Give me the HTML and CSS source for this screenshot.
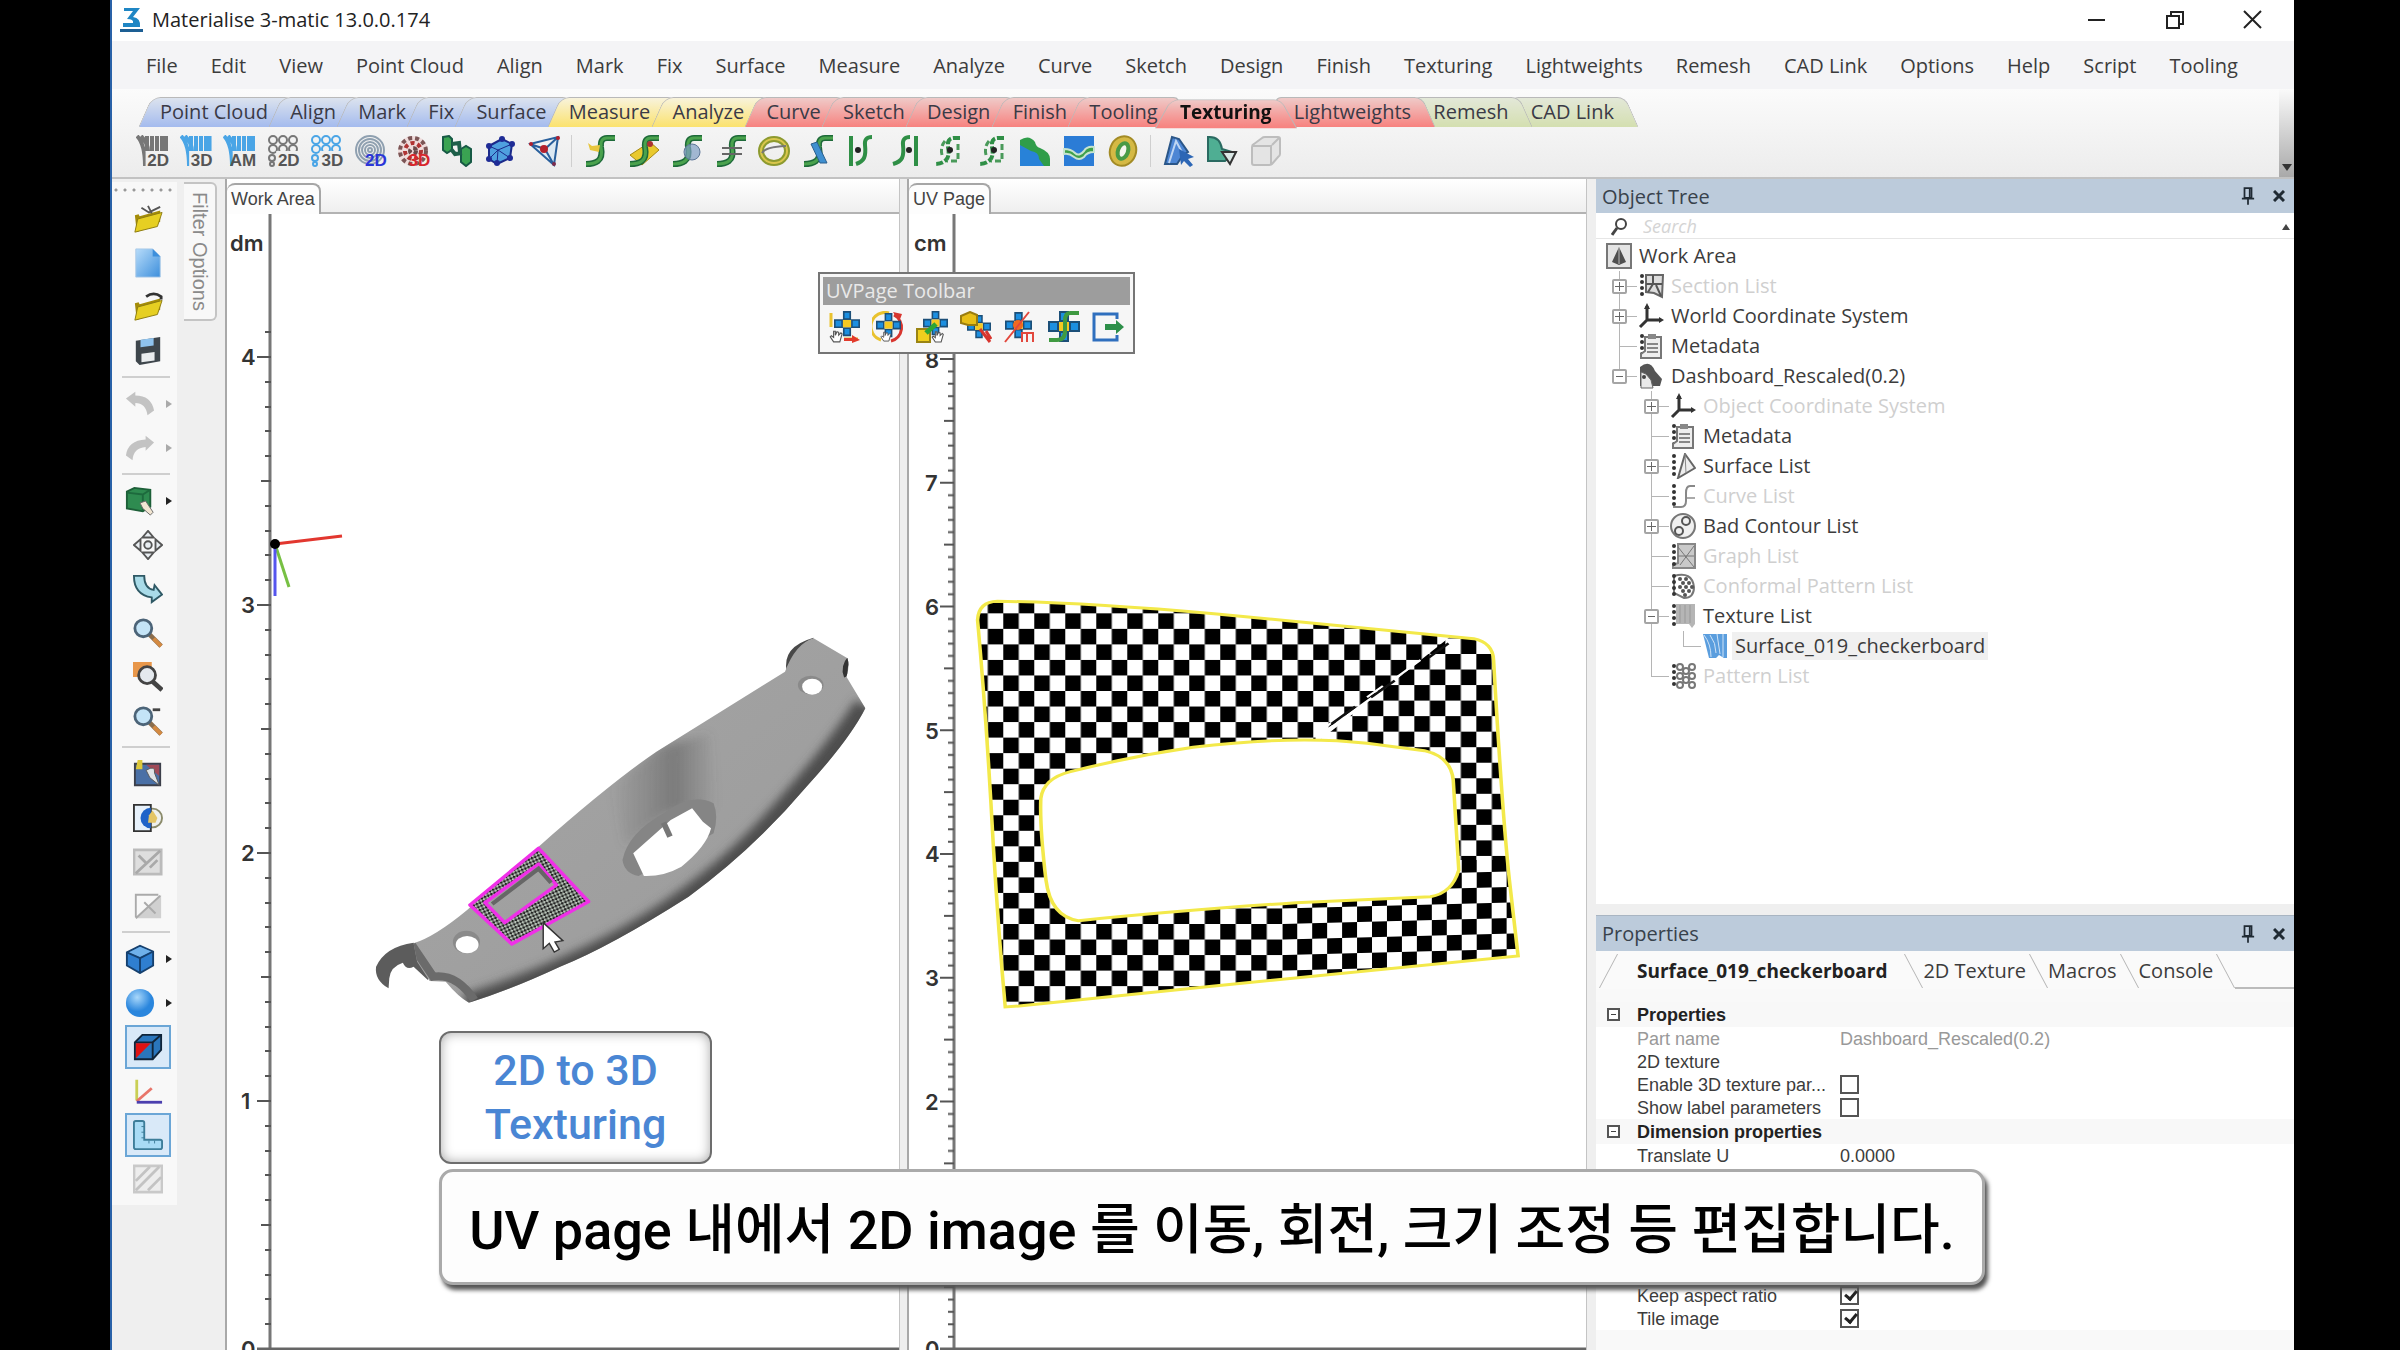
FILE: index.html
```html
<!DOCTYPE html>
<html lang="ko">
<head>
<meta charset="utf-8">
<title>Materialise 3-matic 13.0.0.174</title>
<link rel="stylesheet" href="styles.css">
</head>
<body>
<svg class="sprite" aria-hidden="true">
  <defs>
    <linearGradient id="gBlue" x1="0" y1="0" x2="1" y2="1"><stop offset="0" stop-color="#b7dcfa"/><stop offset="1" stop-color="#3d8fdc"/></linearGradient>
    <linearGradient id="gPart" x1="0" y1="0" x2="1" y2="1"><stop offset="0" stop-color="#a6a6a6"/><stop offset="1" stop-color="#9a9a9a"/></linearGradient>
    <radialGradient id="gBall" cx=".4" cy=".3"><stop offset="0" stop-color="#a9d8fb"/><stop offset="1" stop-color="#2a86dd"/></radialGradient>
    <symbol id="stripes" viewBox="0 0 32 32"><path d="M1 1q8 8 8 30M5 1q7 7 7 15M11 1v15M16 1v16M21 1v16M26 1v16M30 1v16" fill="none" stroke="currentColor" stroke-width="4"/></symbol>
    <symbol id="rings" viewBox="0 0 32 32"><g fill="none" stroke="currentColor" stroke-width="2"><circle cx="6" cy="5" r="4"/><circle cx="16" cy="5" r="4"/><circle cx="26" cy="5" r="4"/><circle cx="6" cy="14" r="4"/><circle cx="16" cy="14" r="4"/><circle cx="26" cy="14" r="4"/><circle cx="5" cy="23" r="3"/><circle cx="5" cy="29" r="2"/></g></symbol>
    <symbol id="finger" viewBox="0 0 32 32"><g fill="none" stroke="#8fa0b0" stroke-width="2"><circle cx="16" cy="15" r="14"/><circle cx="16" cy="15" r="11"/><circle cx="16" cy="15" r="8"/><circle cx="16" cy="15" r="5"/><circle cx="16" cy="15" r="2"/></g></symbol>
    <symbol id="speckle" viewBox="0 0 32 32"><circle cx="16" cy="16" r="15" fill="#efdcdc"/><g fill="none" stroke-width="4" stroke-dasharray="4 3"><circle cx="16" cy="16" r="13" stroke="#7b5555"/><circle cx="16" cy="16" r="8" stroke="#b03434"/><circle cx="16" cy="16" r="3" stroke="#6a4a4a"/></g></symbol>
    <symbol id="linked" viewBox="0 0 32 32"><path d="M2 2l6-1 3 3v11l-5 3-4-3zM20 14l5-3 5 3v13l-5 4-5-4z" fill="#3aa352" stroke="#175a45" stroke-width="2"/><path d="M10 14l4 5 7-1M11 9l7-1 1 9" fill="none" stroke="#1d5f4a" stroke-width="4"/></symbol>
    <symbol id="meshcube" viewBox="0 0 32 32"><path d="M5 11L18 4l10 5-2 14-13 6-8-5z" fill="#4fa0df" stroke="#1b2a8a" stroke-width="2"/><path d="M5 11l9 4 14-6M14 15l-1 14M14 15l12 8M5 24l9-9" fill="none" stroke="#1b2a8a" stroke-width="1"/><g fill="#1f2c96"><circle cx="5" cy="11" r="3"/><circle cx="18" cy="4" r="3"/><circle cx="28" cy="9" r="3"/><circle cx="26" cy="23" r="3"/><circle cx="13" cy="28" r="3"/><circle cx="5" cy="24" r="3"/></g></symbol>
    <symbol id="tetra" viewBox="0 0 32 32"><path d="M2 9L30 2l-4 28zM2 9l15 5L30 2M17 14l9 16" fill="#cfe4f5" fill-opacity=".6" stroke="#285f9c" stroke-width="2"/><circle cx="16" cy="14" r="4" fill="#b3202c"/><circle cx="30" cy="3" r="2" fill="#b3202c"/><circle cx="3" cy="9" r="2" fill="#b3202c"/><circle cx="26" cy="29" r="2" fill="#7b2c4c"/></symbol>
    <symbol id="scurve" viewBox="0 0 32 32"><path d="M31 3H23q-7 0-6 9 2 10-3 14-4 3-12 3" fill="none" stroke="#1d6a39" stroke-width="6"/><path d="M31 3H23q-7 0-6 9 2 10-3 14-4 3-12 3" fill="none" stroke="#4aa24d" stroke-width="3"/></symbol>
    <symbol id="loop" viewBox="0 0 32 32"><ellipse cx="16" cy="16" rx="13" ry="12" fill="none" stroke="#8d9a2f" stroke-width="6"/><ellipse cx="16" cy="16" rx="13" ry="12" fill="none" stroke="#d9c64c" stroke-width="2"/><path d="M4 18q3-6 24-7" fill="none" stroke="#777" stroke-width="2"/></symbol>
    <symbol id="sbar" viewBox="0 0 32 32"><path d="M6 1v30" stroke="#2f8f46" stroke-width="4"/><path d="M27 2q-8 0-7 8 1 9-1 13t-8 6" fill="none" stroke="#2f8f46" stroke-width="4"/><circle cx="13" cy="15" r="3" fill="#222"/></symbol>
    <symbol id="sbar2" viewBox="0 0 32 32"><path d="M27 1v30" stroke="#2f8f46" stroke-width="4"/><path d="M21 2q-8 0-7 8 1 9-1 13t-9 6" fill="none" stroke="#2f8f46" stroke-width="4"/><circle cx="20" cy="15" r="3" fill="#222"/></symbol>
    <symbol id="sdash" viewBox="0 0 32 32"><path d="M28 3H22q-7 0-6 9 2 9-2 13t-11 4" fill="none" stroke="#2f8f46" stroke-width="4" stroke-dasharray="7 2"/><path d="M10 20q-2-8 3-14M26 9v17H15" fill="none" stroke="#4a9a5a" stroke-width="3" stroke-dasharray="6 3"/><circle cx="18" cy="15" r="3" fill="#222"/></symbol>
    <symbol id="cloudblock" viewBox="0 0 32 32"><path d="M1 5q9-6 15 2 1 5 5 6 10 4 10 11v7H1z" fill="#2f9d49"/><path d="M1 10l11 6q8 1 8 8l5 7H1z" fill="#2882d8"/></symbol>
    <symbol id="wave" viewBox="0 0 32 32"><path d="M1 1h30v30H1z" fill="#2b7cd6"/><path d="M1 14q7 0 11 4t9-2q3-5 10-4v5q-7 0-10 5-5 4-10 0t-10-3z" fill="#3fa14a" stroke="#c8e4d0" stroke-width="2"/></symbol>
    <symbol id="torus" viewBox="0 0 32 32"><ellipse cx="16" cy="16" rx="13" ry="15" transform="rotate(20 16 16)" fill="#d5b944" stroke="#a38b25" stroke-width="2"/><ellipse cx="16" cy="16" rx="5" ry="8" transform="rotate(20 16 16)" fill="#f5f5ee" stroke="#4a9a45" stroke-width="4"/></symbol>
    <symbol id="pick" viewBox="0 0 32 32"><path d="M2 29L9 2l7 2 9 13-5 3-6 9z" fill="#4d86d4" stroke="#2a5688" stroke-width="2"/><path d="M6 28L13 6l8 15" fill="none" stroke="#bfd6f2" stroke-width="2"/><path d="M16 14l15 8-6 2 5 6-3 2-6-6-3 4z" fill="#2c66b5"/></symbol>
    <symbol id="partdown" viewBox="0 0 32 32"><path d="M2 2q12-1 14 12l13 4-10 8H2z" fill="#4fae93" stroke="#2a6a61" stroke-width="2"/><path d="M16 17h14l-6 12z" fill="#dbe8e6" stroke="#333" stroke-width="2"/></symbol>
    <symbol id="ghostbox" viewBox="0 0 32 32"><path d="M2 12q0-2 2-3l8-6q1-1 3-1h13q2 0 2 2v15q0 2-2 3l-6 7q-1 1-3 1H4q-2 0-2-2z" fill="#e4e4e4" stroke="#bdbdbd" stroke-width="2"/><path d="M3 11h18v18M22 10l7-7" fill="none" stroke="#bdbdbd" stroke-width="2"/></symbol>

    <symbol id="folder" viewBox="0 0 32 32"><path d="M2 12l4-1 1 2 22-6v12L4 30z" fill="#a48c08"/><path d="M2 30l3-14 26-7-5 15z" fill="#e6cf22" stroke="#8b7a10" stroke-width="1"/></symbol>
    <symbol id="page" viewBox="0 0 32 32"><path d="M3 1h18l8 8v22H3z" fill="url(#gBlue)" stroke="#a6c8e6"/><path d="M21 1l8 8h-8z" fill="#3d8fdc"/></symbol>
    <symbol id="floppy" viewBox="0 0 32 32"><path d="M3 5l26-4v26L7 31l-4-4z" fill="#3e464c"/><path d="M8 4l14-2v8L8 12z" fill="#8fc3ee"/><path d="M9 19l14-2v9L9 28z" fill="#e9ecee"/></symbol>
    <symbol id="undo" viewBox="0 0 32 32"><path d="M1 10L11 3v4q17 0 20 16l-7 5q-2-13-13-13v4z" fill="#c3c3c3"/></symbol>
    <symbol id="redo" viewBox="0 0 32 32"><path d="M31 10L22 3v4Q3 8 1 24l7 5q1-13 14-14v4z" fill="#c3c3c3"/></symbol>
    <symbol id="greenbox" viewBox="0 0 32 32"><path d="M2 6l8-4 17 2v18l-8 5-17-3z" fill="#2e8b50" stroke="#1d5f38" stroke-width="2"/><path d="M2 7l17 2 8-5M19 9v17" fill="none" stroke="#1d6a3d" stroke-width="2"/><path d="M16 18l6-2 4 6 4 6-3 3-8-7z" fill="#f2e6d2" stroke="#666"/></symbol>
    <symbol id="move" viewBox="0 0 32 32"><g fill="#e9eef2" stroke="#555" stroke-width="2"><path d="M16 1l6 7H10zM16 31l6-7H10zM1 16l7-6v12zM31 16l-7-6v12z"/><circle cx="16" cy="16" r="4"/></g></symbol>
    <symbol id="turn" viewBox="0 0 32 32"><path d="M1 2h11q0 13 10 15l1-5 8 10-11 8v-5Q1 22 1 2z" fill="#a9dbe8" stroke="#2f5965" stroke-width="2"/></symbol>
    <symbol id="lens" viewBox="0 0 32 32"><path d="M17 17l13 13" stroke="#8a6d4d" stroke-width="5"/><path d="M22 22l8 8" stroke="#d48a42" stroke-width="4"/><circle cx="11" cy="11" r="9" fill="#c4e4f7" stroke="#4c6478" stroke-width="3"/></symbol>
    <symbol id="lensbox" viewBox="0 0 32 32"><path d="M0 0h20v16H0z" fill="#e8974a"/><path d="M20 20l11 10" stroke="#444" stroke-width="5"/><circle cx="15" cy="14" r="9" fill="#e4e9ee" stroke="#444" stroke-width="3"/></symbol>
    <symbol id="photo" viewBox="0 0 32 32"><path d="M2 5h27v23H2z" fill="#4a70a6" stroke="#3c3f4a" stroke-width="2"/><path d="M14 6h14v12z" fill="#a04a58"/><path d="M5 1h5v10H3z" fill="#ddc83a"/><path d="M14 12q10-6 9 3l5 13-10-8z" fill="#dfe3e6" stroke="#555"/></symbol>
    <symbol id="halfball" viewBox="0 0 32 32"><circle cx="21" cy="16" r="10" fill="#eef0ee" stroke="#8b8b6b" stroke-width="2"/><path d="M1 2h18v28H1z" fill="#e7f1fb" stroke="#333" stroke-width="2"/><path d="M19 5a11 11 0 0 0 0 22z" fill="#1f63c8"/><path d="M17 13l4-5 5 8-2 5h-8z" fill="#e4c566"/></symbol>
    <symbol id="ghost" viewBox="0 0 32 32"><path d="M1 3h29v26H1z" fill="#dedede" stroke="#bbb" stroke-width="3"/><path d="M3 28L29 4M6 9l8 8M18 22l8-8" stroke="#a9a9a9" stroke-width="3"/></symbol>
    <symbol id="ghost2" viewBox="0 0 32 32"><path d="M30 4v25H3z" fill="#d0d0d0"/><path d="M3 28V4h24M3 29L29 5M12 12l12 12" fill="none" stroke="#aaa" stroke-width="2"/></symbol>
    <symbol id="cube" viewBox="0 0 32 32"><path d="M2 9l14-7 14 6v15l-14 8-14-8z" fill="#2f7fd0" stroke="#15406e" stroke-width="2"/><path d="M4 9l12-6 12 5-12 6z" fill="#6fb1ea"/><path d="M2 9l14 6v16M16 15l14-7" fill="none" stroke="#15406e" stroke-width="2"/></symbol>
    <symbol id="ball" viewBox="0 0 32 32"><circle cx="16" cy="16" r="15" fill="url(#gBall)"/></symbol>
    <symbol id="cutcube" viewBox="0 0 32 32"><path d="M2 11l8-8h20v16l-9 10H2z" fill="#2a76bd" stroke="#10253a" stroke-width="2"/><path d="M2 11h19v18M21 11l9-8" fill="none" stroke="#10253a" stroke-width="2"/><path d="M3 12h16L3 28z" fill="#e01212"/></symbol>
    <symbol id="axes" viewBox="0 0 32 32"><path d="M4 4v22" stroke="#c9cf55" stroke-width="3"/><path d="M4 27L20 13" stroke="#e8756a" stroke-width="3"/><path d="M4 28h27" stroke="#4b3fae" stroke-width="3"/></symbol>
    <symbol id="ruler" viewBox="0 0 32 32"><path d="M3 1h7q2 0 2 2v18h17q2 0 2 2v6q0 2-2 2H3q-2 0-2-2V3q0-2 2-2z" fill="#a8dbf5" stroke="#3d7d99" stroke-width="2"/><path d="M9 7h3M9 13h3M9 19h3M17 22v3M23 22v3" stroke="#3d7d99"/></symbol>
    <symbol id="hatch" viewBox="0 0 32 32"><path d="M1 2h30v28H1z" fill="#ededed" stroke="#c9c9c9" stroke-width="3"/><path d="M3 18L18 3M3 28L28 3M16 28l14-14" stroke="#c3c3c3" stroke-width="3"/></symbol>

    <symbol id="plus5" viewBox="0 0 32 32"><g fill="#1c8fe0" stroke="#1c4f78" stroke-width="2"><path d="M12 1h8v9h-8zM12 21h8v9h-8zM1 11h9v9H1zM22 11h9v9h-9z"/></g><path d="M11 11h10v9H11z" fill="#f5c921"/></symbol>
    <symbol id="hand" viewBox="0 0 32 32"><path d="M10 30l-6-9 2-2 4 3V11h3v7l3-6 3 1v5l4-4 2 2-4 14z" fill="#fff" stroke="#555" stroke-width="2"/></symbol>
    <symbol id="export" viewBox="0 0 32 32"><path d="M25 8V3H2v26h23v-5" fill="none" stroke="#2f6fbe" stroke-width="3"/><path d="M13 13h11V9l8 7-8 7v-4H13z" fill="#2d8f49"/></symbol>

    <symbol id="t-area" viewBox="0 0 26 26"><path d="M1 1h24v24H1z" fill="#e4e4e4" stroke="#777" stroke-width="2"/><path d="M13 4l7 15-7 3-7-3z" fill="#4f4f4f"/><path d="M13 5v16" stroke="#bbb"/></symbol>
    <symbol id="t-dots" viewBox="0 0 26 26"><g fill="#333"><circle cx="4" cy="3" r="2"/><circle cx="4" cy="9" r="2"/><circle cx="4" cy="15" r="2"/><circle cx="4" cy="21" r="2"/></g></symbol>
    <symbol id="t-section" viewBox="0 0 26 26"><use href="#t-dots"/><path d="M8 2h17l-1 22-8-4-8-1z" fill="#ddd" stroke="#666" stroke-width="2"/><path d="M8 11h16M15 2v9l-5 8M18 12l5 11" stroke="#555" stroke-width="2" fill="none"/></symbol>
    <symbol id="t-axes" viewBox="0 0 26 26"><path d="M9 3v14h14M9 17l-7 7" fill="none" stroke="#333" stroke-width="3"/><path d="M9 0l3 6H6zM26 17l-5-3v6z" fill="#333"/></symbol>
    <symbol id="t-meta" viewBox="0 0 26 26"><use href="#t-dots"/><path d="M7 4h16v21H3v-4l4-3z" fill="#eee" stroke="#777" stroke-width="2"/><path d="M10 1h8v5h-8z" fill="#888"/><path d="M9 11h11M9 15h11M9 19h11" stroke="#888" stroke-width="2"/></symbol>
    <symbol id="t-part" viewBox="0 0 26 26"><path d="M2 4q10-8 15 4l7 8-2 7H2z" fill="#555"/><path d="M3 9l5 2 5 6 2 8H3z" fill="#e9e9e9" stroke="#666"/><circle cx="6" cy="14" r="2" fill="#444"/></symbol>
    <symbol id="t-surface" viewBox="0 0 26 26"><use href="#t-dots"/><path d="M15 1l10 14L8 25z" fill="#eee" stroke="#666" stroke-width="2"/><path d="M15 1l1 19" stroke="#888"/></symbol>
    <symbol id="t-curve" viewBox="0 0 26 26"><use href="#t-dots"/><path d="M25 3h-5q-4 0-4 7v8q0 6-5 6H3" fill="none" stroke="#888" stroke-width="2"/><path d="M17 15h8" stroke="#aaa" stroke-width="2"/></symbol>
    <symbol id="t-contour" viewBox="0 0 26 26"><circle cx="13" cy="13" r="12" fill="#f0f0f0" stroke="#777" stroke-width="2"/><g fill="none" stroke="#555" stroke-width="2"><circle cx="16" cy="8" r="4"/><circle cx="9" cy="18" r="4"/></g></symbol>
    <symbol id="t-graph" viewBox="0 0 26 26"><path d="M8 1h17v24H3v-3l5-2z" fill="#c9c9c9" stroke="#888" stroke-width="2"/><path d="M8 4l16 20M24 3L10 22M8 13h16" stroke="#777"/><use href="#t-dots"/></symbol>
    <symbol id="t-conf" viewBox="0 0 26 26"><path d="M4 3q18-5 20 11 0 11-10 11L4 20z" fill="#fff" stroke="#777" stroke-width="2"/><g fill="#555"><circle cx="10" cy="6" r="2"/><circle cx="16" cy="6" r="2"/><circle cx="13" cy="10" r="2"/><circle cx="19" cy="10" r="2"/><circle cx="10" cy="14" r="2"/><circle cx="16" cy="14" r="2"/><circle cx="22" cy="14" r="2"/><circle cx="13" cy="18" r="2"/><circle cx="19" cy="18" r="2"/><circle cx="15" cy="22" r="2"/></g><use href="#t-dots"/></symbol>
    <symbol id="t-texture" viewBox="0 0 26 26"><path d="M6 1h19v20l-3 4-3-4H6z" fill="#b5b5b5"/><path d="M10 2v18M15 2v18M20 2v18" stroke="#999"/><use href="#t-dots"/></symbol>
    <symbol id="t-checker" viewBox="0 0 26 26"><path d="M1 1h24v24h-3l-5-3-3 3H7z" fill="#5b9ede"/><path d="M2 2q7 9 7 22M8 2q6 8 6 18M15 1l3 20M21 1v23" fill="none" stroke="#cfe3f7"/></symbol>
    <symbol id="t-pattern" viewBox="0 0 26 26"><g fill="none" stroke="#777" stroke-width="2"><circle cx="10" cy="4" r="3"/><circle cx="16" cy="8" r="3"/><circle cx="22" cy="4" r="3"/><circle cx="10" cy="13" r="3"/><circle cx="16" cy="17" r="3"/><circle cx="22" cy="13" r="3"/><circle cx="10" cy="22" r="3"/><circle cx="22" cy="22" r="3"/></g><use href="#t-dots"/></symbol>
    <symbol id="pin" viewBox="0 0 16 20"><path d="M4 1h8v11H4z" fill="none" stroke="#1f2a33" stroke-width="2"/><path d="M10 1v11M1 13h14M8 13v7" stroke="#1f2a33" stroke-width="2"/></symbol>
    <symbol id="cross" viewBox="0 0 12 12"><path d="M1 1l10 10M11 1L1 11" stroke="#1f2a33" stroke-width="3"/></symbol>
  </defs>
</svg>

<div class="app">
  <header class="titlebar">
    <svg class="logo" viewBox="0 0 24 26"><path d="M4 1h16l-7 9q8 1 7 10H3v-4h10q1-4-6-4l6-8H4z" fill="#1f86c4"/><path d="M0 22h23v3H0z" fill="#1d5f94"/></svg>
    <h1>Materialise 3-matic 13.0.0.174</h1>
    <div class="winctl">
      <button aria-label="Minimize"><svg viewBox="0 0 20 20"><path d="M1 10h17" stroke="#222" stroke-width="2"/></svg></button>
      <button aria-label="Restore"><svg viewBox="0 0 20 20"><path d="M2 6h12v12H2zM6 5V2h12v12h-3" fill="none" stroke="#222" stroke-width="2"/></svg></button>
      <button aria-label="Close"><svg viewBox="0 0 20 20"><path d="M1 1l17 17M18 1L1 18" stroke="#222" stroke-width="2"/></svg></button>
    </div>
  </header>

  <nav class="menubar">
    <button>File</button><button>Edit</button><button>View</button><button>Point Cloud</button><button>Align</button><button>Mark</button><button>Fix</button><button>Surface</button><button>Measure</button><button>Analyze</button><button>Curve</button><button>Sketch</button><button>Design</button><button>Finish</button><button>Texturing</button><button>Lightweights</button><button>Remesh</button><button>CAD Link</button><button>Options</button><button>Help</button><button>Script</button><button>Tooling</button>
  </nav>

  <section class="ribbon">
    <div class="ribbon-main">
      <div class="tabs">
        <button class="blue">Point Cloud</button><button class="blue">Align</button><button class="blue">Mark</button><button class="blue">Fix</button><button class="blue">Surface</button><button class="yellow">Measure</button><button class="yellow">Analyze</button><button class="red">Curve</button><button class="red">Sketch</button><button class="red">Design</button><button class="red">Finish</button><button class="red">Tooling</button><button class="red active">Texturing</button><button class="red after a1">Lightweights</button><button class="green after a2">Remesh</button><button class="green after a3">CAD Link</button>
      </div>
      <div class="tools">
        <button class="gray" aria-label="2D texture"><svg><use href="#stripes"/></svg><b>2D</b></button>
        <button class="sky" aria-label="3D texture"><svg><use href="#stripes"/></svg><b>3D</b></button>
        <button class="sky" aria-label="AM texture"><svg><use href="#stripes"/></svg><b>AM</b></button>
        <button class="gray" aria-label="2D pattern"><svg><use href="#rings"/></svg><b>2D</b></button>
        <button class="sky" aria-label="3D pattern"><svg><use href="#rings"/></svg><b>3D</b></button>
        <button class="navy" aria-label="2D conformal"><svg><use href="#finger"/></svg><b>2D</b></button>
        <button class="crimson" aria-label="3D conformal"><svg><use href="#speckle"/></svg><b>3D</b></button>
        <button aria-label="Link parts"><svg><use href="#linked"/></svg></button>
        <button aria-label="Mesh cube"><svg><use href="#meshcube"/></svg></button>
        <button aria-label="Tetra graph"><svg><use href="#tetra"/></svg></button>
        <i></i>
        <button aria-label="New curve"><svg viewBox="0 0 32 32"><use href="#scurve"/><path d="M4 8l4 3 8-1-1 7-9-2z" fill="#e7c63f"/></svg></button>
        <button aria-label="Curve on face"><svg viewBox="0 0 32 32"><path d="M2 20L22 7l9 8-17 15z" fill="#e9c92e" stroke="#a78a14"/><use href="#scurve"/><circle cx="22" cy="9" r="3" fill="#a33"/></svg></button>
        <button aria-label="Project curve"><svg viewBox="0 0 32 32"><use href="#scurve"/><circle cx="21" cy="17" r="8" fill="#7f9ec4" fill-opacity=".7" stroke="#5d7698"/></svg></button>
        <button aria-label="Split curve"><svg viewBox="0 0 32 32"><use href="#scurve"/><path d="M7 13h20M7 19h20" stroke="#666" stroke-width="2"/></svg></button>
        <button aria-label="Close curve"><svg><use href="#loop"/></svg></button>
        <button aria-label="Attach curve"><svg viewBox="0 0 32 32"><use href="#scurve"/><path d="M9 9l6-2 10 21h-7z" fill="#3f8fd0" stroke="#2b5f8d"/></svg></button>
        <button aria-label="Offset left"><svg><use href="#sbar"/></svg></button>
        <button aria-label="Offset right"><svg><use href="#sbar2"/></svg></button>
        <button aria-label="Dashed curve"><svg><use href="#sdash"/></svg></button>
        <button aria-label="Dashed contour"><svg><use href="#sdash"/></svg></button>
        <button aria-label="Block"><svg><use href="#cloudblock"/></svg></button>
        <button aria-label="Wave split"><svg><use href="#wave"/></svg></button>
        <button aria-label="Torus"><svg><use href="#torus"/></svg></button>
        <i></i>
        <button aria-label="Pick"><svg><use href="#pick"/></svg></button>
        <button aria-label="Filter part"><svg><use href="#partdown"/></svg></button>
        <button aria-label="Box"><svg><use href="#ghostbox"/></svg></button>
      </div>
    </div>
    <button class="more" aria-label="More tools"></button>
  </section>

  <main class="workspace">
    <aside class="side">
      <div class="sidebar">
        <button aria-label="Open part"><svg viewBox="0 0 32 32"><use href="#folder"/><path d="M9 4l8 5 12-6M16 2l4 8" fill="none" stroke="#555" stroke-width="2"/></svg></button>
        <button aria-label="New"><svg><use href="#page"/></svg></button>
        <button aria-label="Open"><svg viewBox="0 0 32 32"><use href="#folder"/><path d="M14 5q8-6 16 0v3" fill="none" stroke="#333" stroke-width="3"/></svg></button>
        <button aria-label="Save"><svg><use href="#floppy"/></svg></button>
        <hr>
        <button class="drop off" aria-label="Undo"><svg><use href="#undo"/></svg></button>
        <button class="drop off" aria-label="Redo"><svg><use href="#redo"/></svg></button>
        <hr>
        <button class="drop" aria-label="Select"><svg><use href="#greenbox"/></svg></button>
        <button aria-label="Pan"><svg><use href="#move"/></svg></button>
        <button aria-label="Rotate"><svg><use href="#turn"/></svg></button>
        <button aria-label="Zoom"><svg><use href="#lens"/></svg></button>
        <button aria-label="Zoom box"><svg><use href="#lensbox"/></svg></button>
        <button aria-label="Zoom out"><svg viewBox="0 0 32 32"><use href="#lens"/><path d="M21 4h8" stroke="#444" stroke-width="3"/></svg></button>
        <hr>
        <button aria-label="Snapshot"><svg><use href="#photo"/></svg></button>
        <button aria-label="Compare"><svg><use href="#halfball"/></svg></button>
        <button aria-label="Hide"><svg><use href="#ghost"/></svg></button>
        <button aria-label="Show"><svg><use href="#ghost2"/></svg></button>
        <hr>
        <button class="drop" aria-label="View cube"><svg><use href="#cube"/></svg></button>
        <button class="drop" aria-label="Shading"><svg><use href="#ball"/></svg></button>
        <button class="on" aria-label="Clipping"><svg><use href="#cutcube"/></svg></button>
        <button aria-label="Axes"><svg><use href="#axes"/></svg></button>
        <button class="on" aria-label="Rulers"><svg><use href="#ruler"/></svg></button>
        <button aria-label="Hatch"><svg><use href="#hatch"/></svg></button>
      </div>
      <button class="filter">Filter Options</button>
    </aside>

    <section class="view">
      <div class="view-head"><button>Work Area</button></div>
      <svg class="scene">
        <defs>
          <pattern id="tickDm" width="14" height="248" patternUnits="userSpaceOnUse" x="30" y="142">
            <path d="M0 1h14M8 26h6M8 51h6M8 75h6M8 100h6M4 125h10M8 150h6M8 175h6M8 199h6M8 224h6" stroke="#555" stroke-width="2"/>
          </pattern>
          <pattern id="weave" width="14" height="14" patternUnits="userSpaceOnUse" patternTransform="rotate(20)"><path d="M0 0h14v14H0z" fill="#b9c4b9"/><path d="M0 0h7v7H0zM7 7h7v7H7z" fill="#222"/></pattern>
          <linearGradient id="shade" x1="0" y1="0" x2="1" y2="0"><stop offset="0" stop-color="#555" stop-opacity="0"/><stop offset=".6" stop-color="#555" stop-opacity=".5"/><stop offset="1" stop-color="#555" stop-opacity="0"/></linearGradient>
          <filter id="soft"><feGaussianBlur stdDeviation="14"/></filter>
          <clipPath id="partClip"><path d="M150 1030Q210 1010 300 930L500 740Q700 550 830 455L1190 215Q1220 130 1270 115L1365 175Q1372 200 1362 230L1415 325Q1370 420 1250 560Q1100 750 920 890Q700 1040 560 1100Q420 1170 305 1208Q275 1190 240 1145L195 1143L160 1085Z"/></clipPath>
        </defs>
        <path d="M43 0v1136" stroke="#777" stroke-width="3"/>
        <rect x="30" y="117" width="14" height="1020" fill="url(#tickDm)"/>
        <path d="M30 1135h3000" stroke="#666" stroke-width="3"/>
        <g class="scale"><text x="3" y="37">dm</text><text x="14" y="151">4</text><text x="14" y="399">3</text><text x="14" y="647">2</text><text x="14" y="895">1</text><text x="14" y="1143">0</text></g>
        <path d="M48 330l67-8" stroke="#e2372f" stroke-width="3"/><path d="M48 330l14 43" stroke="#77c043" stroke-width="3"/><path d="M48 330v52" stroke="#5555ee" stroke-width="3"/><circle cx="48" cy="330" r="5"/>
        <svg x="133" y="386" width="560" height="420" viewBox="0 0 1568 1260" preserveAspectRatio="none">
          <path d="M80 1165Q40 1140 45 1100Q70 1040 150 1028L210 1100L190 1140L150 1100Q130 1112 120 1088Q85 1100 82 1135Z" fill="#5c5c5c"/>
          <path d="M1195 215Q1180 140 1270 113L1240 190Z" fill="#484848"/>
          <path d="M150 1030Q210 1010 300 930L500 740Q700 550 830 455L1190 215Q1220 130 1270 115L1365 175Q1372 200 1362 230L1415 325Q1370 420 1250 560Q1100 750 920 890Q700 1040 560 1100Q420 1170 305 1208Q275 1190 240 1145L195 1143L160 1085Z" fill="url(#gPart)"/>
          <g clip-path="url(#partClip)">
            <path d="M300 1220Q560 1130 760 1010Q1000 860 1160 670Q1330 470 1420 320" fill="none" stroke="#4d4d4d" stroke-width="76" filter="url(#soft)"/>
            <path d="M700 560L840 440 980 400 1000 620 860 640 740 740Z" fill="url(#shade)" filter="url(#soft)"/>
            <path d="M145 1035L205 1130Q270 1120 320 1200" fill="none" stroke="#6b6b6b" stroke-width="24"/>
            <path d="M1375 170Q1350 200 1362 230" fill="none" stroke="#333" stroke-width="14"/>
          </g>
          <path d="M735 780Q750 700 850 640Q930 575 990 610Q1005 650 990 700L780 828Q740 820 735 780Z" fill="#858585"/>
          <path d="M765 760L870 660 930 625 960 665 983 685Q970 740 900 800Q850 830 795 828Z" fill="#fff"/>
          <path d="M850 668l18 42" stroke="#777" stroke-width="16"/>
          <ellipse cx="1262" cy="255" rx="36" ry="28" fill="#8a8a8a"/><ellipse cx="1266" cy="260" rx="28" ry="24" fill="#fff"/>
          <ellipse cx="298" cy="1026" rx="38" ry="34" fill="#8a8a8a"/><ellipse cx="300" cy="1034" rx="32" ry="26" fill="#fff"/>
          <path d="M500 745L640 905 425 1032 308 915ZM350 908L405 968 550 855 500 792Z" fill="url(#weave)" fill-rule="evenodd" stroke="#f02fe8" stroke-width="10" stroke-linejoin="round"/>
          <path d="M370 912L500 806l35 42" fill="none" stroke="#666" stroke-width="12"/>
          <path d="M513 968v78l17-16 14 26 14-8-12-22 22-4z" fill="#fff" stroke="#333" stroke-width="4"/>
        </svg>
      </svg>
    </section>

    <section class="view uv">
      <div class="view-head"><button>UV Page</button></div>
      <svg class="scene">
        <defs>
          <pattern id="tickCm" width="14" height="123.75" patternUnits="userSpaceOnUse" x="31" y="144">
            <path d="M0 1h14M8 13.4h6M8 25.8h6M8 38.1h6M8 50.5h6M4 62.9h10M8 75.3h6M8 87.6h6M8 100h6M8 112.4h6" stroke="#555" stroke-width="2"/>
          </pattern>
          <pattern id="chk1" width="78.4" height="93.2" patternUnits="userSpaceOnUse" x="160" y="160"><path d="M0 0h39.2v46.6H0zM39.2 46.6h39.2v46.6H39.2z"/></pattern>
          <pattern id="chk2" width="78.4" height="93.2" patternUnits="userSpaceOnUse" x="1278" y="282"><path d="M0 0h39.2v46.6H0zM39.2 46.6h39.2v46.6H39.2z"/></pattern>
          <pattern id="chk3" width="78.4" height="93.2" patternUnits="userSpaceOnUse" patternTransform="matrix(.965 -.03 0 1 865.6 1092)"><path d="M0 0h39.2v46.6H0zM39.2 46.6h39.2v46.6H39.2z"/></pattern>
          <path id="uvShape" d="M95 180Q98 125 145 124Q350 126 700 162L1350 236Q1398 248 1400 300Q1422 760 1440 960L1462 1188L700 1277L200 1338L165 1341Q148 1120 135 860Q118 480 95 180ZM255 715Q262 655 330 635Q480 590 640 562Q900 525 1080 550L1225 572Q1292 590 1298 660L1312 930Q1295 1000 1240 1010L900 1028Q600 1052 350 1082Q280 1070 268 960Q252 800 255 715Z"/>
          <clipPath id="uvClip"><use href="#uvShape" clip-rule="evenodd"/></clipPath>
        </defs>
        <path d="M45 0v1136" stroke="#777" stroke-width="3"/>
        <rect x="31" y="144" width="14" height="992" fill="url(#tickCm)"/>
        <path d="M31 1135h3000" stroke="#666" stroke-width="3"/>
        <g class="scale"><text x="5" y="37">cm</text><text x="16" y="154">8</text><text x="16" y="277">7</text><text x="16" y="401">6</text><text x="16" y="525">5</text><text x="16" y="648">4</text><text x="16" y="772">3</text><text x="16" y="896">2</text><text x="16" y="1143">0</text></g>
        <svg x="31" y="346" width="620" height="480" viewBox="0 0 1568 1440" preserveAspectRatio="none">
          <g clip-path="url(#uvClip)">
            <path d="M0 0H1568V1440H0Z" fill="#fff"/>
            <path d="M80 100H1290V240L950 530 935 900H865V1400H80Z" fill="url(#chk1)"/>
            <path d="M1290 230L1500 230V900H1200V560H940Z" fill="url(#chk2)"/>
            <path d="M866 900H1500V1400H866Z" fill="url(#chk3)"/>
            <path d="M1215 300l-60 52M1120 378l-40 34M1020 460l-60 56" stroke="#fff" stroke-width="6"/>
            <path d="M1286 250l-50 43M1150 362l-60 50M1050 440l-60 52" stroke="#111" stroke-width="7"/>
          </g>
          <use href="#uvShape" fill="none" stroke="#f3e94a" stroke-width="9"/>
        </svg>
      </svg>
    </section>

    <aside class="dock">
      <section class="tree-panel">
        <header class="dock-head"><h2>Object Tree</h2><button aria-label="Pin"><svg class="i-pin"><use href="#pin"/></svg></button><button aria-label="Close"><svg class="i-x"><use href="#cross"/></svg></button></header>
        <label class="search"><svg viewBox="0 0 16 18"><circle cx="10" cy="6" r="5" fill="none" stroke="#444" stroke-width="2"/><path d="M6 10l-5 7" stroke="#444" stroke-width="3"/></svg><input type="text" placeholder="Search" aria-label="Search"><span class="up"></span></label>
        <div class="tree">
          <div class="row root"><svg><use href="#t-area"/></svg><span>Work Area</span></div>
          <ul>
            <li><div class="row"><button class="exp plus" aria-label="Expand"></button><svg><use href="#t-section"/></svg><span class="dim">Section List</span></div></li>
            <li><div class="row"><button class="exp plus" aria-label="Expand"></button><svg><use href="#t-axes"/></svg><span>World Coordinate System</span></div></li>
            <li><div class="row"><i class="exp"></i><svg><use href="#t-meta"/></svg><span>Metadata</span></div></li>
            <li><div class="row"><button class="exp minus" aria-label="Collapse"></button><svg><use href="#t-part"/></svg><span>Dashboard_Rescaled(0.2)</span></div>
              <ul>
                <li><div class="row"><button class="exp plus" aria-label="Expand"></button><svg><use href="#t-axes"/></svg><span class="dim">Object Coordinate System</span></div></li>
                <li><div class="row"><i class="exp"></i><svg><use href="#t-meta"/></svg><span>Metadata</span></div></li>
                <li><div class="row"><button class="exp plus" aria-label="Expand"></button><svg><use href="#t-surface"/></svg><span>Surface List</span></div></li>
                <li><div class="row"><i class="exp"></i><svg><use href="#t-curve"/></svg><span class="dim">Curve List</span></div></li>
                <li><div class="row"><button class="exp plus" aria-label="Expand"></button><svg><use href="#t-contour"/></svg><span>Bad Contour List</span></div></li>
                <li><div class="row"><i class="exp"></i><svg><use href="#t-graph"/></svg><span class="dim">Graph List</span></div></li>
                <li><div class="row"><i class="exp"></i><svg><use href="#t-conf"/></svg><span class="dim">Conformal Pattern List</span></div></li>
                <li><div class="row"><button class="exp minus" aria-label="Collapse"></button><svg><use href="#t-texture"/></svg><span>Texture List</span></div>
                  <ul><li><div class="row"><i class="exp"></i><svg><use href="#t-checker"/></svg><span class="picked">Surface_019_checkerboard</span></div></li></ul>
                </li>
                <li><div class="row"><i class="exp"></i><svg><use href="#t-pattern"/></svg><span class="dim">Pattern List</span></div></li>
              </ul>
            </li>
          </ul>
        </div>
      </section>

      <section class="prop-panel">
        <header class="dock-head"><h2>Properties</h2><button aria-label="Pin"><svg class="i-pin"><use href="#pin"/></svg></button><button aria-label="Close"><svg class="i-x"><use href="#cross"/></svg></button></header>
        <div class="prop-tabs"><button class="current">Surface_019_checkerboard</button><button>2D Texture</button><button>Macros</button><button>Console</button><span class="rest"></span></div>
        <table>
          <colgroup><col class="c-fold"><col class="c-name"><col></colgroup>
          <tbody>
            <tr class="group"><td><button class="fold" aria-label="Collapse Properties"></button></td><th colspan="2">Properties</th></tr>
            <tr class="dimrow"><td></td><th>Part name</th><td>Dashboard_Rescaled(0.2)</td></tr>
            <tr><td></td><th>2D texture</th><td></td></tr>
            <tr><td></td><th><label for="p3d">Enable 3D texture par...</label></th><td><input type="checkbox" id="p3d"></td></tr>
            <tr><td></td><th><label for="plab">Show label parameters</label></th><td><input type="checkbox" id="plab"></td></tr>
            <tr class="group"><td><button class="fold" aria-label="Collapse Dimension properties"></button></td><th colspan="2">Dimension properties</th></tr>
            <tr><td></td><th>Translate U</th><td>0.0000</td></tr>
            <tr class="spacer"><td colspan="3"></td></tr>
            <tr><td></td><th><label for="pasp">Keep aspect ratio</label></th><td><input type="checkbox" id="pasp" checked></td></tr>
            <tr><td></td><th><label for="ptile">Tile image</label></th><td><input type="checkbox" id="ptile" checked></td></tr>
          </tbody>
        </table>
      </section>
    </aside>
  </main>

  <div class="floatbar">
    <h2>UVPage Toolbar</h2>
    <div class="floatbar-tools">
      <button aria-label="Move"><svg viewBox="0 0 32 32"><use href="#plus5" x="6" y="0" width="26" height="26"/><path d="M3 2v14M16 28h14" stroke="#e9c22e" stroke-width="3"/><path d="M16 27h8v-3l8 5-8 3v-2h-8z" fill="#e23b2c"/><use href="#hand" x="0" y="14" width="18" height="18"/></svg></button>
      <button aria-label="Rotate"><svg viewBox="0 0 32 32"><path d="M17 2a14 14 0 0 0-8 27" fill="none" stroke="#e9c22e" stroke-width="3"/><path d="M22 4a14 14 0 0 1-3 26" fill="none" stroke="#d8362f" stroke-width="3"/><path d="M21 1l9 2-3 8z" fill="#d8362f"/><use href="#plus5" x="4" y="2" width="25" height="25"/><use href="#hand" x="7" y="16" width="15" height="15"/></svg></button>
      <button aria-label="Scale"><svg viewBox="0 0 32 32"><use href="#plus5" x="7" y="0" width="25" height="25"/><path d="M1 18h13v13H1z" fill="#f0cf1e" stroke="#9a8413" stroke-width="2"/><path d="M10 22l10-9" stroke="#2da535" stroke-width="5"/><use href="#hand" x="14" y="15" width="17" height="17"/></svg></button>
      <button aria-label="Align"><svg viewBox="0 0 32 32"><use href="#plus5" x="7" y="4" width="24" height="24"/><path d="M1 5l9-4 7 3v10H8L1 12z" fill="#e8bf17" stroke="#9a7d10" stroke-width="2"/><path d="M20 18l10 13M26 20l5 8" stroke="#d8362f" stroke-width="3"/></svg></button>
      <button aria-label="Mirror"><svg viewBox="0 0 32 32"><use href="#plus5" x="1" y="1" width="27" height="27"/><circle cx="14" cy="14" r="5" fill="#f06a1f"/><path d="M1 31L25 1M18 31v-9h5v9m0-9h6v9" fill="none" stroke="#e2483d" stroke-width="2"/></svg></button>
      <button aria-label="Unwrap"><svg viewBox="0 0 32 32"><use href="#plus5"/><path d="M31 2h-9q-5 0-5 8v10q0 9-8 9H1" fill="none" stroke="#3f9a41" stroke-width="4"/></svg></button>
      <button aria-label="Exit"><svg><use href="#export"/></svg></button>
    </div>
  </div>

  <div class="badge">2D to 3D<br>Texturing</div>
  <p class="caption">UV page 내에서 2D image 를 이동, 회전, 크기 조정 등 편집합니다.</p>
</div>
</body>
</html>
```
FILE: styles.css
```css
* { box-sizing: border-box; }
html, body { height: 100%; margin: 0; }
body { background: #000; overflow: hidden; font-family: "Open Sans", "Noto Sans CJK KR", sans-serif; font-size: 20px; color: #3c3c3c; }
button { border: 0; padding: 0; background: none; font: inherit; color: inherit; }
h1, h2, p, ul { margin: 0; padding: 0; font-weight: 400; }
ul { list-style: none; }
.sprite { position: absolute; width: 0; height: 0; }

.app { position: relative; display: flex; flex-direction: column; height: 100%; margin: 0 106px 0 110px; border-left: 2px solid #2a62a8; background: #efefef; overflow: hidden; }

/* title and menu */
.titlebar { display: flex; align-items: center; flex: none; height: 41px; padding: 0 31px 2px 8px; background: #fff; }
.titlebar h1 { flex: 1; font-size: 20px; color: #222; }
.logo { width: 24px; height: 26px; margin-right: 8px; }
.winctl { display: flex; gap: 58px; }
.winctl svg { display: block; width: 20px; height: 20px; }
.menubar { display: flex; justify-content: space-between; align-items: center; flex: none; height: 48px; padding: 0 56px 0 34px; background: #f4f4f6; }
.menubar button { font-size: 20px; white-space: nowrap; }

/* ribbon */
.ribbon { display: flex; justify-content: space-between; flex: none; height: 90px; background: linear-gradient(#fbfbfb, #ececec); border-bottom: 2px solid #c2c2c2; }
.ribbon-main { padding: 8px 0 0 24px; }
.tabs { display: flex; justify-content: space-between; width: 1502px; height: 30px; padding: 0 24px; }
.tabs button { position: relative; z-index: 1; font-size: 20px; line-height: 28px; white-space: nowrap; color: #3a3a46; }
.tabs button::before { content: ""; position: absolute; z-index: -1; inset: 0 -18px 0 -15px; border-radius: 9px 8px 0 0; border: 1px solid #b9b9b9; border-bottom: 0; transform: skewX(-24deg); }
.tabs .blue::before { background: linear-gradient(#dce3ee, #a4bbee); }
.tabs .yellow::before { background: linear-gradient(#f8f3dc, #fbe26e); }
.tabs .red::before { background: linear-gradient(#efcac8, #f7827f); }
.tabs .green::before { background: linear-gradient(#e3e8d8, #d4dfb0); }
.tabs .active { color: #111; font-size: 19px; font-weight: 700; z-index: 5; }
.tabs .active::before { transform: perspective(40px) rotateX(20deg); inset: 0 -16px; }
.tabs .after::before { transform: skewX(24deg); }
.tabs .a1 { z-index: 4; }
.tabs .a2 { z-index: 3; }
.tabs .a3 { z-index: 2; }
.tools { display: flex; justify-content: space-between; width: 1146px; padding-top: 8px; }
.tools button { position: relative; width: 32px; height: 32px; color: #777; }
.tools svg { display: block; width: 32px; height: 32px; }
.tools .sky { color: #4aa5e6; }
.tools b { position: absolute; right: -1px; bottom: -3px; font-family: "Liberation Sans", sans-serif; font-size: 17px; line-height: 18px; color: #555; }
.tools .gray svg, .tools .sky svg { clip-path: polygon(0 0, 100% 0, 100% 50%, 30% 50%, 30% 100%, 0 100%); }
.tools .navy b { color: #2b35d8; }
.tools .crimson b { color: #d8262c; }
.tools i { width: 1px; height: 32px; background: #cfcfcf; }
.more { position: relative; width: 15px; background: linear-gradient(#fafafa, #a9a9a9); }
.more::after { content: ""; position: absolute; left: 3px; bottom: 6px; border: 5px solid transparent; border-top: 7px solid #333; border-bottom: 0; }

/* workspace */
.workspace { flex: 1; min-height: 0; display: grid; grid-template-columns: 113px minmax(0, 682fr) minmax(0, 689fr) 698px; }
.side { display: flex; align-items: flex-start; gap: 7px; padding-top: 3px; }
.sidebar { display: flex; flex-direction: column; width: 65px; padding: 15px 10px 4px; background: radial-gradient(circle at 3px 3px, #999 1px, transparent 2px) 10px 5px / 9px 9px repeat-x, #f8f8f8; }
.sidebar button { display: flex; align-items: center; justify-content: center; flex: none; width: 46px; height: 44px; margin-left: 3px; }
.sidebar svg { width: 30px; height: 30px; }
.sidebar hr { flex: none; width: 48px; height: 2px; margin: 3px 0 4px; border: 0; background: #cfcfcf; }
.sidebar .drop { position: relative; justify-content: flex-start; }
.sidebar .drop::after { content: ""; position: absolute; right: -1px; top: 18px; border: 4px solid transparent; border-left: 6px solid #222; border-right: 0; }
.sidebar .off::after { border-left-color: #aaa; }
.sidebar .on { border: 2px solid #6ba6d6; background: #d9e9f8; }
.filter { width: 33px; height: 139px; writing-mode: vertical-rl; border: 2px solid #c4c4c4; border-left: 0; border-radius: 0 6px 6px 0; background: #f8f8f8; font-family: "Liberation Sans", sans-serif; font-size: 20px; line-height: 28px; color: #8a8a8a; }

.view { display: flex; flex-direction: column; min-height: 0; border-left: 2px solid #a9a9a9; border-right: 1px solid #c4c4c4; margin-right: 7px; background: #fff; }
.uv { margin-right: 9px; }
.view-head { flex: none; display: flex; align-items: flex-end; height: 35px; border-bottom: 2px solid #b3b3b3; background: linear-gradient(#fff, #efefef); }
.view-head button { height: 31px; margin-bottom: -2px; padding: 0 4px; border: 2px solid #a6a6a6; border-bottom: 0; border-left: 0; border-radius: 8px 8px 0 0; background: #fdfdfd; font-family: "Liberation Sans", sans-serif; font-size: 18px; color: #444; }
.scene { flex: 1; min-height: 0; width: 100%; overflow: hidden; }
.scale { font-family: Inter, sans-serif; font-size: 22px; font-weight: 600; fill: #333; }

/* dock */
.dock { display: flex; flex-direction: column; min-width: 0; }
.dock-head { display: flex; align-items: center; height: 34px; padding: 0 9px 0 6px; background: #bccbdb; }
.dock-head h2 { flex: 1; font-size: 20px; color: #38424c; }
.dock-head button { display: flex; align-items: center; }
.i-pin { width: 14px; height: 20px; margin-right: 18px; }
.i-x { width: 12px; height: 12px; }
.tree-panel { flex: none; height: 725px; margin-bottom: 11px; background: #fff; }
.search { display: flex; align-items: flex-end; height: 26px; padding: 0 4px 2px 15px; border-bottom: 1px solid #e6e6e6; }
.search svg { width: 16px; height: 18px; margin-right: 10px; }
.search input { flex: 1; height: 20px; padding: 0 6px; border: 0; background: #fff; font: italic 18px "Open Sans", sans-serif; }
.search input::placeholder { color: #d4d4d4; opacity: 1; }
.up { margin-bottom: 6px; border: 4px solid transparent; border-bottom: 6px solid #444; border-top: 0; }
.tree { padding: 2px 0 0 10px; }
.tree ul ul { margin-left: 32px; }
.tree li { position: relative; }
.tree li::before { content: ""; position: absolute; left: 13px; top: 0; bottom: 0; width: 1px; background: #b5b5b5; }
.tree li:last-child::before { bottom: auto; height: 15px; }
.tree li::after { content: ""; position: absolute; left: 13px; top: 15px; width: 18px; height: 1px; background: #b5b5b5; }
.row { display: flex; align-items: center; height: 30px; font-size: 20px; line-height: 28px; white-space: nowrap; }
.row svg { width: 26px; height: 26px; margin-right: 4px; }
.row span { padding: 0 3px; }
.row .dim { color: #cfcfcf; }
.row .picked { background: #f0f0f0; }
.exp { position: relative; z-index: 1; flex: none; width: 15px; height: 15px; margin: 0 11px 0 6px; }
.plus, .minus { border: 2px solid #a5a5a5; border-radius: 2px; background: linear-gradient(#666, #666) center / 7px 1px no-repeat, #fff; }
.plus { background: linear-gradient(#666, #666) center / 9px 1px no-repeat, linear-gradient(#666, #666) center / 1px 9px no-repeat, #fff; }

.prop-panel { flex: 1; min-height: 0; background: #f9f9f9; }
.prop-panel .dock-head { height: 36px; border-top: 1px solid #a9b5c2; }
.prop-tabs { display: flex; height: 38px; background: #fafafa; }
.prop-tabs button { position: relative; padding: 2px 0 0 22px; font-size: 20px; line-height: 36px; white-space: nowrap; }
.prop-tabs .current { padding: 2px 14px 0 41px; font-size: 19px; font-weight: 700; color: #222; }
.prop-tabs button::after { content: ""; position: absolute; right: -13px; top: 3px; width: 1px; height: 34px; background: #b5b5b5; transform: skewX(28deg); }
.prop-tabs .current::before { content: ""; position: absolute; left: 12px; top: 3px; width: 1px; height: 34px; background: #b5b5b5; transform: skewX(-28deg); }
.prop-tabs .rest { flex: 1; margin-left: 22px; border-bottom: 2px solid #bbb; }
table { width: 100%; margin-top: 13px; border-collapse: collapse; table-layout: fixed; font-family: "Liberation Sans", sans-serif; font-size: 18px; background: #fff; }
.c-fold { width: 41px; }
.c-name { width: 203px; }
tr { height: 23px; }
td, th { padding: 0; font-weight: 400; text-align: left; line-height: 20px; white-space: nowrap; }
.group { height: 25px; background: #f8f8f8; }
.group th { font-weight: 700; color: #222; }
.dimrow { color: #999; }
.spacer { height: 117px; }
.fold { display: block; width: 13px; height: 13px; margin-left: 11px; border: 2px solid #555; background: linear-gradient(#444, #444) center / 5px 1px no-repeat, #fff; }
input[type="checkbox"] { appearance: none; display: block; width: 19px; height: 19px; margin: 0; border: 2px solid #555; background: #fff; }
input[type="checkbox"]:checked::after { content: ""; display: block; width: 5px; height: 9px; margin: 0 0 0 5px; border: solid #222; border-width: 0 3px 3px 0; transform: rotate(40deg); }

/* floating toolbar */
.floatbar { position: absolute; left: 706px; top: 272px; width: 317px; height: 82px; padding: 3px; border: 2px solid #757575; background: #f6f6f6; }
.floatbar h2 { height: 28px; padding-left: 3px; background: #9d9d9d; color: #e9e9e9; font-size: 20px; line-height: 28px; }
.floatbar-tools { display: flex; gap: 12px; padding: 6px 5px; }
.floatbar-tools svg { display: block; width: 32px; height: 32px; }

/* lesson captions */
.badge { position: absolute; left: 327px; top: 1031px; width: 273px; height: 133px; padding-top: 10px; border: 2px solid #6d6d6d; border-radius: 12px; background: #fff; box-shadow: inset 0 0 12px #aaa; font-family: Roboto, sans-serif; font-size: 43px; line-height: 54px; font-weight: 500; text-align: center; color: #4a86d4; }
.caption { position: absolute; left: 327px; top: 1169px; width: 1546px; height: 116px; padding-top: 4px; border: 3px solid #aaa; border-radius: 14px; background: #fdfdfd; box-shadow: 3px 5px 4px #555; font-family: Roboto, "Noto Sans CJK KR", sans-serif; font-size: 54px; line-height: 110px; font-weight: 500; text-align: center; white-space: nowrap; color: #000; }
```
